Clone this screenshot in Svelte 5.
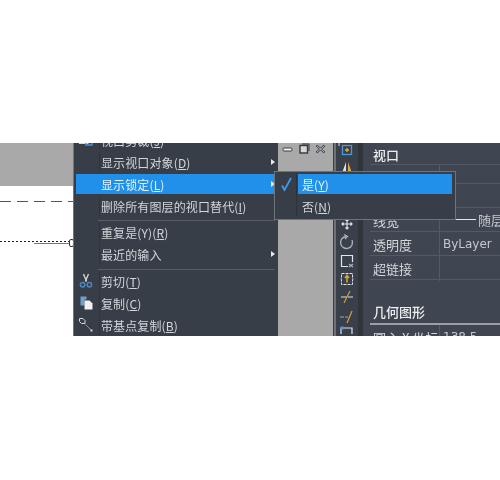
<script>
  const topRows = [
    { label: '视口剪裁', key: 'J', icon: 'clip' },
    { label: '显示视口对象', key: 'D', arrow: true },
    { label: '显示锁定', key: 'L', arrow: true, active: true },
    { label: '删除所有图层的视口替代', key: 'I' },
  ];
  const midRows = [
    { label: '重复是(Y)', key: 'R' },
    { label: '最近的输入', arrow: true },
  ];
  const editRows = [
    { label: '剪切', key: 'T', icon: 'cut' },
    { label: '复制', key: 'C', icon: 'copy' },
    { label: '带基点复制', key: 'B', icon: 'base' },
  ];
  const groups = [topRows, midRows, editRows];

  const props = [
    { label: '', value: '' },
    { label: '颜色', value: '' },
    { label: '线宽', value: '随层', sample: true },
    { label: '透明度', value: 'ByLayer' },
    { label: '超链接', value: '' },
  ];
</script>

{#snippet menuIcon(name)}
  {#if name === 'cut'}
    <svg width="16" height="16" viewBox="0 0 16 16" fill="none">
      <path d="M5.500 1 8.600 8.500M10.500 1 7.400 8.500" stroke="#d5d9de" stroke-width="1.300" />
      <circle cx="4.600" cy="11.800" r="2.200" stroke="#4f86bd" stroke-width="1.500" />
      <circle cx="11.400" cy="11.800" r="2.200" stroke="#4f86bd" stroke-width="1.500" />
    </svg>
  {:else if name === 'copy'}
    <svg width="16" height="16" viewBox="0 0 16 16">
      <path d="M2.500 1.500h6v3h-2v6h-4z" fill="#6f9fd0" />
      <path d="M6.500 5.500h5l3 3v6h-8z" fill="#eef0f2" />
    </svg>
  {:else if name === 'base'}
    <svg width="16" height="16" viewBox="0 0 16 16" fill="none">
      <path d="M1.500 1.500h3.500l2 2v3h-3.500l-2-2z" stroke="#d5d8dc" />
      <path d="M7.500 7.500 13 13" stroke="#8f949a" />
      <rect x="12.500" y="12.500" width="2" height="2" fill="#d5d8dc" />
    </svg>
  {:else if name === 'clip'}
    <svg width="16" height="16" viewBox="0 0 16 16" fill="none">
      <path d="M1.500 1.500v10h9" stroke="#d8dbde" stroke-width="1.200" />
      <rect x="8" y="8" width="6" height="5" stroke="#4f95dc" stroke-width="1.400" />
    </svg>
  {/if}
{/snippet}

<div class="app">
  <section class="window">
    <div class="drawing">
      <div class="drawing-top"></div>
      <svg class="drawing-lines" width="73" height="150" viewBox="0 0 73 150" fill="none">
        <path d="M0 15.500H73" stroke="#555" stroke-dasharray="11 6" />
        <path d="M0 55.500H70" stroke="#222" stroke-dasharray="2 2" />
        <path d="M34 57.500H70" stroke="#777" />
        <rect x="69.500" y="53.500" width="4" height="7" rx="1.500" stroke="#333" />
      </svg>
    </div>

    <nav class="menu">
      {#each groups as rows, g}
        {#if g > 0}
          <div class="sep" class:short={g === 1}><i></i></div>
        {/if}
        {#each rows as row}
          <div class="row" class:active={row.active}>
            <span class="gutter">
              {#if row.icon}{@render menuIcon(row.icon)}{/if}
            </span>
            <span class="label">{row.label}{#if row.key}(<u>{row.key}</u>){/if}</span>
            {#if row.arrow}<span class="arrow"></span>{/if}
          </div>
        {/each}
      {/each}
    </nav>

    <div class="viewport-gap">
      <div class="win-btns">
        <svg width="12" height="10" viewBox="0 0 12 10"><rect x="1" y="4" width="9" height="3" rx="1" fill="#f2f2f2" stroke="#3a3f46" /></svg>
        <svg width="11" height="11" viewBox="0 0 11 11" fill="none"><rect x="1" y="2.500" width="7.500" height="7.500" fill="#d8d8d8" stroke="#33383f" stroke-width="1.400" /><path d="M3 1h7v7" stroke="#33383f" /></svg>
        <svg width="11" height="10" viewBox="0 0 11 10" fill="none"><path d="M1.500 1.500l8 7M9.500 1.500l-8 7" stroke="#33383f" stroke-width="2.200" /><path d="M2 2l7 6M9 2 2 8" stroke="#eee" stroke-width=".7" /></svg>
      </div>
    </div>

    <aside class="toolbar">
      <div class="tools">
        <svg width="18" height="18" viewBox="0 2 18 18" fill="none">
          <path d="M1 6V1h7" stroke="#ddd" />
          <rect x="4.500" y="5.500" width="9" height="9" stroke="#4f95dc" stroke-width="1.300" />
          <path d="M9 8v4M7 10h4" stroke="#e0a63c" stroke-width="1.300" />
        </svg>
        <svg width="18" height="18" viewBox="0 0 18 18">
          <path d="M8 2v14H3z" fill="#dfe1e4" />
          <path d="M10 2v14h5z" fill="#dfa846" />
        </svg>
        <span class="tool-blank"></span>
        <span class="tool-blank"></span>
        <svg width="18" height="18" viewBox="0 0 18 18" fill="none" stroke="#dfe3e8" stroke-width="1.200">
          <path d="M9 4v10M4 9h10M7.500 5.500 9 4l1.500 1.500M7.500 12.500 9 14l1.500-1.500M5.500 7.500 4 9l1.500 1.500M12.500 7.500 14 9l-1.500 1.500" />
        </svg>
        <svg width="18" height="18" viewBox="0 0 18 18" fill="none">
          <path d="M8 3.500a6 6 0 1 0 6 3.500" stroke="#aeb4bb" stroke-width="1.300" />
          <path d="M6 1.500 9.500 3.500 7 6" stroke="#aeb4bb" stroke-width="1.200" />
        </svg>
        <svg width="18" height="18" viewBox="0 0 18 18" fill="none">
          <path d="M10 14.500H3.500v-11h11V10" stroke="#e3e5e8" stroke-width="1.200" />
          <path d="M11 12l4 3M15 12l-4 3" stroke="#9fb6cf" stroke-width="1.200" />
        </svg>
        <svg width="18" height="18" viewBox="0 0 18 18" fill="none">
          <rect x="3.500" y="3.500" width="11" height="11" stroke="#dfe2e6" stroke-dasharray="3 1" />
          <path d="M9 12.500V6M7 8l2-2.500L11 8" stroke="#e0a63c" stroke-width="1.500" />
          <path d="M2 9h2M14 9h2" stroke="#4f95dc" />
        </svg>
        <svg width="18" height="18" viewBox="0 0 18 18" fill="none">
          <path d="M3 9h12" stroke="#dfe2e6" stroke-dasharray="6 1" />
          <path d="M6 15 12 3" stroke="#c49a4c" stroke-width="1.300" />
        </svg>
        <svg width="18" height="18" viewBox="0 0 18 18" fill="none">
          <path d="M2 10h8" stroke="#9aa7b5" stroke-dasharray="4 1" stroke-width="1.200" />
          <path d="M9 16 14 4" stroke="#c49a4c" stroke-width="1.300" />
        </svg>
        <svg width="18" height="18" viewBox="0 0 18 18" fill="none">
          <path d="M3 9V3h11v6" stroke="#dfe2e6" stroke-width="1.200" />
          <rect x="2.500" y="1.500" width="3" height="3" fill="#4f95dc" />
        </svg>
      </div>
    </aside>

    <main class="panel">
      <h3 class="head">视口</h3>
      <div class="grid">
        {#each props as p}
          <div class="prop">
            <span class="key">{p.label}</span>
            <span class="val" class:sample={p.sample}>{p.value}</span>
          </div>
        {/each}
      </div>
      <h3 class="head geo">几何图形</h3>
      <div class="prop geo-row">
        <span class="key">圆心 X 坐标</span>
        <span class="val">138.5</span>
      </div>
    </main>

    <div class="submenu">
      <div class="sub-row active">
        <span class="sub-gutter">
          <svg width="14" height="16" viewBox="0 0 14 16" fill="none"><path d="M2 9.500 4.500 14 11 2" stroke="#3d9bea" stroke-width="1.800" /></svg>
        </span>
        <span class="sub-label">是(<u>Y</u>)</span>
      </div>
      <div class="sub-row">
        <span class="sub-gutter"></span>
        <span class="sub-label">否(<u>N</u>)</span>
      </div>
    </div>
  </section>
</div>

<style>
  :global(body) {
    margin: 0;
    background: #fff;
  }

  .app {
    width: 500px;
    height: 480px;
    padding-top: 143px;
    box-sizing: border-box;
    font-family: "Noto Sans CJK SC", "Liberation Sans", sans-serif;
    font-size: 12px;
    overflow: hidden;
  }

  .window {
    position: relative;
    display: grid;
    grid-template-columns: 73px 205px 55px 30px 137px;
    height: 193px;
    overflow: hidden;
    filter: blur(0.45px);
  }

  .drawing {
    background: #fff;
  }

  .drawing-top {
    height: 43px;
    background: #a9a9a9;
  }

  .drawing-lines {
    display: block;
  }

  .menu {
    background: #383e47;
    margin-top: -13px;
    padding: 0 3px;
    border-left: 1px solid #70757b;
    color: #d3d6da;
    box-sizing: border-box;
    letter-spacing: 0.12px;
  }

  .row {
    position: relative;
    display: flex;
    align-items: center;
    height: 20px;
    margin: 0 0 2px -1px;
  }

  .row.active {
    background: #2190ea;
    color: #e6f2fc;
  }

  .gutter {
    display: flex;
    align-items: center;
    justify-content: center;
    width: 24px;
    height: 20px;
    margin-right: 1px;
    padding-right: 3px;
    border-right: 1px solid #30353c;
    box-sizing: border-box;
    flex: none;
  }

  .row.active .gutter {
    border-right-color: transparent;
  }

  .label {
    white-space: nowrap;
  }

  .arrow {
    position: absolute;
    right: 0;
    width: 0;
    height: 0;
    border-left: 4px solid #e6e8ea;
    border-top: 3px solid transparent;
    border-bottom: 3px solid transparent;
  }

  .sep {
    height: 5px;
    padding-left: 21px;
    padding-bottom: 1px;
    box-sizing: border-box;
    display: flex;
    align-items: flex-end;
  }

  .sep.short {
    height: 4px;
  }

  .sep i {
    display: block;
    width: 100%;
    height: 1px;
    background: #585d64;
  }

  .viewport-gap {
    background: #a9a9a9;
  }

  .win-btns {
    display: flex;
    align-items: center;
    gap: 5px;
    padding: 0 0 0 4px;
    height: 11px;
  }

  .toolbar {
    background: #3a4049;
    border-left: 1px solid #3a3f46;
    border-right: 5px solid #30353c;
    box-sizing: border-box;
    box-shadow: inset 2px 0 0 #6d7178;
  }

  .tools {
    display: flex;
    flex-direction: column;
    align-items: center;
    gap: 0.3px;
    margin: -1px 0 0 2px;
  }

  .tools svg,
  .tool-blank {
    display: block;
    width: 18px;
    height: 18px;
    flex: none;
  }

  .panel {
    background: #3f4651;
    color: #d3d6da;
    padding-left: 7px;
    font-size: 13px;
    min-width: 0;
    overflow: hidden;
  }

  .head {
    margin: 0;
    padding-left: 3px;
    height: 21px;
    line-height: 24px;
    font-size: 13px;
    font-weight: 500;
    color: #eceef0;
    border-bottom: 1px solid #535a64;
  }

  .grid {
    display: flex;
    flex-direction: column;
  }

  .prop {
    display: grid;
    grid-template-columns: 70px 1fr;
    height: 24px;
    line-height: 25px;
    border-bottom: 1px solid #535a64;
    box-sizing: border-box;
  }

  .prop:first-child {
    height: 19px;
  }

  .key {
    padding-left: 3px;
    border-right: 1px solid #535a64;
    white-space: nowrap;
  }

  .val {
    padding-left: 3px;
    font-family: "DejaVu Sans", sans-serif;
    font-size: 12px;
    line-height: 24px;
    color: #c3c8ce;
    white-space: nowrap;
    overflow: hidden;
  }

  .val.sample {
    font-family: "Noto Sans CJK SC", sans-serif;
    font-size: 13px;
    background: linear-gradient(#e8e8e8, #e8e8e8) 0 11px / 36px 1px no-repeat;
    padding-left: 38px;
  }

  .geo {
    margin-top: 20px;
    height: 23px;
    line-height: 23px;
    border-bottom: 2px solid #9a9fa6;
  }

  .geo-row {
    border: 0;
  }

  .submenu {
    position: absolute;
    left: 274px;
    top: 28px;
    width: 182px;
    height: 49px;
    box-sizing: border-box;
    padding: 2px 3px 2px 2px;
    background: #383e47;
    border: 1px solid #6f747a;
    color: #d3d6da;
    letter-spacing: 0.12px;
  }

  .sub-row {
    display: flex;
    align-items: center;
    height: 20px;
    margin-bottom: 2px;
  }

  .sub-row.active .sub-label {
    background: #2190ea;
    color: #e6f2fc;
  }

  .sub-gutter {
    display: flex;
    align-items: center;
    justify-content: center;
    width: 19px;
    height: 22px;
    border-right: 1px solid #2d3239;
    flex: none;
    margin-right: 1px;
  }

  .sub-label {
    flex: 1;
    height: 20px;
    line-height: 21px;
    padding-left: 4px;
  }
</style>
